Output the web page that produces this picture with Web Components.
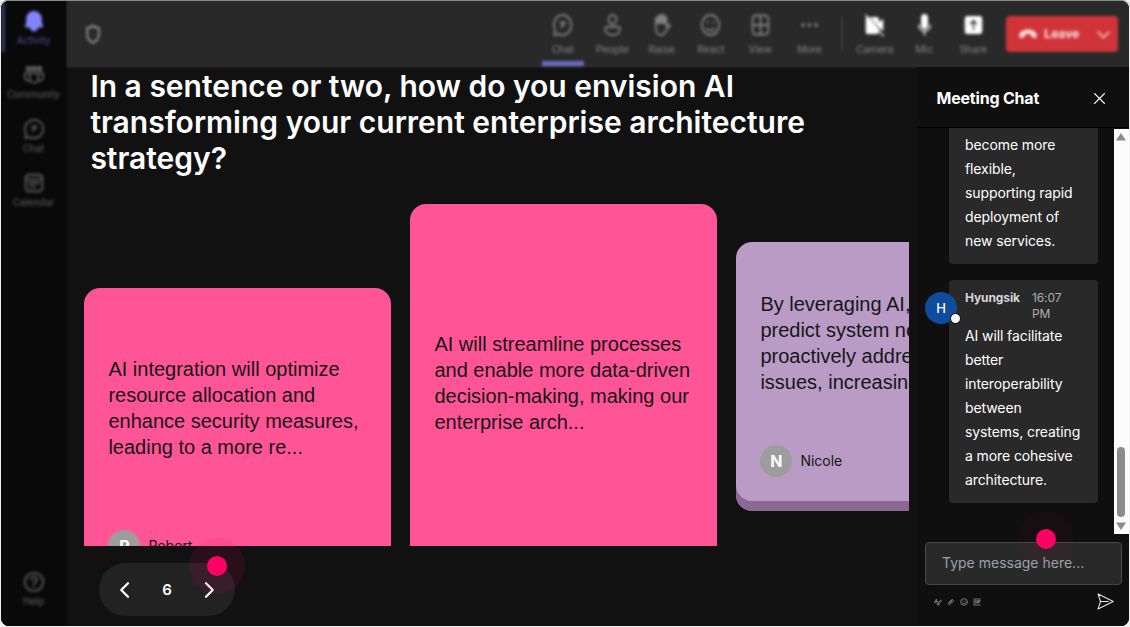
<!DOCTYPE html>
<html lang="en">
<head>
<meta charset="utf-8">
<title>Meeting</title>
<style>
    html, body {
        margin: 0;
        height: 100%;
        overflow: hidden;
        background: #f1f1f1;
        font-family: Inter, "Liberation Sans", sans-serif;
    }
</style>
</head>
<body>
<meeting-app></meeting-app>

<script>
const ICONS = {
    bell: '<path fill="currentColor" d="M12 2a7.500 7.500 0 0 0-7.500 7.500V14L3 18h18l-1.500-4V9.500A7.500 7.500 0 0 0 12 2zM8.500 19a3.500 3.500 0 0 0 7 0z"/>',
    community: '<g fill="currentColor"><circle cx="6" cy="5" r="2.200"/><circle cx="12" cy="5" r="2.200"/><circle cx="18" cy="5" r="2.200"/></g><path d="M7.500 10h9v6a4.500 4.500 0 0 1-9 0zM7 10H2v4a4 4 0 0 0 5.500 4M17 10h5v4a4 4 0 0 1-5.500 4"/>',
    chat: '<path d="M12 2a10 10 0 1 1-4.500 18.900L2.500 22l1-5A10 10 0 0 1 12 2z"/><path d="M9.500 9.500h5.500L10.500 14"/>',
    calendar: '<rect x="3" y="3" width="18" height="18" rx="3.500"/><path d="M3 8h18M7 12h10M7 16h6"/>',
    help: '<circle cx="12" cy="12" r="10"/><path d="M9 9.500a3 3 0 1 1 4 2.800c-.8.400-1 1-1 1.700M12 16.500v1"/>',
    shield: '<path d="M12 3c3 2 5 2.500 7 2.500V12c0 5-3 8-7 9.500C8 20 5 17 5 12V5.500c2 0 4-.5 7-2.500z"/>',
    person: '<circle cx="12" cy="6.500" r="4.500"/><path d="M5 14h14a1.500 1.500 0 0 1 1.500 1.500c0 4-3.500 6.500-8.500 6.500s-8.500-2.500-8.500-6.500A1.500 1.500 0 0 1 5 14z"/>',
    hand: '<path fill="currentColor" d="M5.500 10V6a1.500 1.500 0 0 1 3 0V4a1.500 1.500 0 0 1 3 0V3a1.500 1.500 0 0 1 3 0v2a1.500 1.500 0 0 1 3 0v5z"/><path d="M5.500 7v9c0 4 3 6 6 6 4 0 5-3 7-6l3-3.500c-1.500-1.800-3-.8-4 1V5"/>',
    smile: '<circle cx="12" cy="12" r="10"/><path d="M7.500 15.500c2 2.500 7 2.500 9 0M8 9.500h1M15 9.500h1"/>',
    grid: '<rect x="3" y="2.500" width="18" height="19" rx="3.500"/><path d="M12 2.500v19M3 12h18"/>',
    more: '<g fill="currentColor" stroke="none"><circle cx="4.500" cy="12" r="2"/><circle cx="12" cy="12" r="2"/><circle cx="19.500" cy="12" r="2"/></g>',
    camera: '<path fill="currentColor" stroke="none" d="M3 4h12a2 2 0 0 1 2 2v3l5-3v12l-5-3v4a2 2 0 0 1-2 2H4a2 2 0 0 1-2-2V5z"/><path stroke="#292929" stroke-width="1" d="M4 2 23 21"/><path stroke-width="1.200" d="M2 2 22 23"/>',
    mic: '<rect fill="currentColor" x="9" y="2" width="6" height="13" rx="3"/><path stroke-width="1.500" d="M5.500 12c0 8 13 8 13 0M12 18v4"/>',
    share: '<rect fill="currentColor" stroke="none" x="2" y="3" width="20" height="18" rx="3"/><path stroke="#292929" stroke-width="1.500" d="M12 16.500V8M8.500 11 12 7.500l3.500 3.500"/>',
    phone: '<path fill="currentColor" stroke="none" d="M12 6.500c5.500 0 10.500 2.500 10.500 7.500 0 2-.8 3-2.200 2.700l-3-.7c-1.200-.3-1.500-1-1.500-3.200-2.300-.9-5.300-.9-7.600 0 0 2.200-.3 2.900-1.500 3.200l-3 .7C2.300 17 1.500 16 1.500 14c0-5 5-7.500 10.500-7.500z"/>',
    down: '<path d="m2 7 10 11L22 7"/>',
    left: '<path d="M16 3 7 12l9 9"/>',
    right: '<path d="m8 3 9 9-9 9"/>',
    close: '<path d="m3 3 18 18M21 3 3 21"/>',
    format: '<path d="m2 15 5-11 3 11M3 11h7M10 21c3-1 10-9 12-13l-2-2-8 10-1 4 5-1"/>',
    clip: '<path d="m7 14 7-8c3-3 8 1 5 4l-9 9c-4 3-8-1-5-5l8-8M9 15l6-6"/>',
    gif: '<path d="M22 3H3v18h18M12 8H7v7h5v-4M15 8v7M22 8h-5v7M17 11h4"/>',
    send: '<path d="M1.500 1.500 23 12 1.500 22.500 5 12zM5 12h11"/>'
};

class UiIcon extends HTMLElement {
    connectedCallback() {
        this.attachShadow({ mode: 'open' });
        const size = this.getAttribute('size') || 20;
        const stroke = this.getAttribute('stroke') || 1.5;
        this.shadowRoot.innerHTML = `
            <style>
                :host { display: inline-flex; flex: none; }
                svg { display: block; overflow: visible; }
            </style>
            <svg width="${size}" height="${this.getAttribute('tall') || size}" viewBox="0 0 24 24" preserveAspectRatio="none"
                 fill="none" stroke="currentColor" stroke-width="${stroke}"
                 stroke-linecap="round" stroke-linejoin="round">${ICONS[this.getAttribute('name')]}</svg>
        `;
    }
}

class RailItem extends HTMLElement {
    connectedCallback() {
        this.attachShadow({ mode: 'open' });
        this.shadowRoot.innerHTML = `
            <style>
                :host {
                    display: flex;
                    flex-direction: column;
                    align-items: center;
                    justify-content: center;
                    gap: 2px;
                    height: 54px;
                    box-sizing: border-box;
                    color: #5c5c5c;
                    font: 10.300px/13px Roboto, sans-serif;
                    filter: blur(1.6px);
                }
                :host([active]) {
                    color: #4b4d92;
                    border-left: 4px solid #34365f;
                    padding-right: 4px;
                    height: 48px;
                    margin-bottom: 3px;
                }
                :host([active]) ui-icon { color: #8186ff; }
            </style>
            <ui-icon name="${this.getAttribute('icon')}" size="22" stroke="2"></ui-icon>
            <slot></slot>
        `;
    }
}

class SideRail extends HTMLElement {
    connectedCallback() {
        this.attachShadow({ mode: 'open' });
        this.shadowRoot.innerHTML = `
            <style>
                :host {
                    display: flex;
                    flex-direction: column;
                    background: #090909;
                    box-sizing: border-box;
                    padding: 3px 0 10px;
                    box-shadow: 0 0 3px #090909;
                }
                .space { flex: 1; }
            </style>
            <rail-item icon="bell" active>Activity</rail-item>
            <rail-item icon="community">Community</rail-item>
            <rail-item icon="chat">Chat</rail-item>
            <rail-item icon="calendar">Calendar</rail-item>
            <div class="space"></div>
            <rail-item icon="help">Help</rail-item>
        `;
    }
}

class ToolButton extends HTMLElement {
    connectedCallback() {
        this.attachShadow({ mode: 'open' });
        this.shadowRoot.innerHTML = `
            <style>
                :host {
                    display: flex;
                    flex-direction: column;
                    align-items: center;
                    gap: 6px;
                    width: 49.3px;
                    height: 100%;
                    box-sizing: border-box;
                    padding-top: 12px;
                    color: #808080;
                    font: 10.700px/13px Roboto, sans-serif;
                    filter: blur(1.6px);
                }
                :host([solid]) ui-icon { color: #fff; }
                .bar { width: 42px; height: 5px; margin-top: -1px; }
                :host([active]) .bar { background: #6a6ec0; }
            </style>
            <ui-icon name="${this.getAttribute('icon')}" size="21" tall="24" stroke="2"></ui-icon>
            <slot></slot>
            <div class="bar"></div>
        `;
    }
}

class LeaveButton extends HTMLElement {
    connectedCallback() {
        this.attachShadow({ mode: 'open' });
        this.shadowRoot.innerHTML = `
            <style>
                :host {
                    display: flex;
                    align-items: center;
                    width: 112px;
                    height: 36px;
                    box-sizing: border-box;
                    padding: 0 8px 0 12px;
                    border-radius: 4px;
                    background: #d13438;
                    color: #f7dcdd;
                    font: 700 13.300px/16px Roboto, sans-serif;
                    filter: blur(1.5px);
                }
                .label { margin: 0 auto 0 6px; }
            </style>
            <ui-icon name="phone" size="20"></ui-icon>
            <span class="label"><slot></slot></span>
            <ui-icon name="down" size="13" stroke="2.500"></ui-icon>
        `;
    }
}

class TopBar extends HTMLElement {
    connectedCallback() {
        this.attachShadow({ mode: 'open' });
        this.shadowRoot.innerHTML = `
            <style>
                :host {
                    display: flex;
                    align-items: flex-start;
                    height: 66px;
                    box-sizing: border-box;
                    padding: 0 11px 0 17px;
                    background: #292929;
                    box-shadow: 0 0 4px #292929;
                }
                .shield { color: #909090; filter: blur(1.4px); margin: 22px auto 0 0; }
                .rule { width: 2px; height: 36px; margin: 15px 7px 0; background: #393939; filter: blur(1px); }
                leave-button { margin: 15px 0 0 8px; }
            </style>
            <ui-icon class="shield" name="shield" size="20" tall="22" stroke="2.300"></ui-icon>
            <tool-button icon="chat" active>Chat</tool-button>
            <tool-button icon="person">People</tool-button>
            <tool-button icon="hand">Raise</tool-button>
            <tool-button icon="smile">React</tool-button>
            <tool-button icon="grid">View</tool-button>
            <tool-button icon="more">More</tool-button>
            <div class="rule"></div>
            <tool-button icon="camera" solid>Camera</tool-button>
            <tool-button icon="mic" solid>Mic</tool-button>
            <tool-button icon="share" solid>Share</tool-button>
            <leave-button>Leave</leave-button>
        `;
    }
}

class AnswerCard extends HTMLElement {
    connectedCallback() {
        this.attachShadow({ mode: 'open' });
        const author = this.getAttribute('author');
        this.shadowRoot.innerHTML = `
            <style>
                :host {
                    display: flex;
                    flex: none;
                    flex-direction: column;
                    justify-content: space-between;
                    width: 306.500px;
                    box-sizing: border-box;
                    padding: 0 24px;
                    border-radius: 16px;
                    background: #ff5496;
                    color: #171717;
                }
                .text {
                    font: 20px/26px "Liberation Sans", Arial, sans-serif;
                    white-space: pre-line;
                }
                .author {
                    display: flex;
                    align-items: center;
                    gap: 8px;
                    font: 14px/20px Inter, sans-serif;
                }
                .avatar {
                    width: 32px;
                    height: 32px;
                    border-radius: 50%;
                    background: #9d9d9d;
                    color: #fff;
                    font: 700 16px/32px Inter, sans-serif;
                    text-align: center;
                }
            </style>
            <div class="text"><slot></slot></div>
            ${author ? `<div class="author"><div class="avatar">${author[0]}</div>${author}</div>` : ''}
        `;
    }
}

class AnswerCarousel extends HTMLElement {
    connectedCallback() {
        this.attachShadow({ mode: 'open' });
        this.shadowRoot.innerHTML = `
            <style>
                :host {
                    display: flex;
                    align-items: flex-start;
                    gap: 19.500px;
                    height: 342px;
                    width: 824.500px;
                    overflow: hidden;
                }
                .first { margin-top: 84px; height: 308px; padding: 68px 24px 34px; }
                .second { height: 390px; padding-top: 127px; }
                .third {
                    margin-top: 38px;
                    height: 269px;
                    padding: 49px 24px 34px;
                    background: #b99bc6;
                    box-shadow: inset 0 -10px 0 #8a6a95;
                }
            </style>
            <answer-card class="first" author="Robert">AI integration will optimize
resource allocation and
enhance security measures,
leading to a more re...</answer-card>
            <answer-card class="second">AI will streamline processes
and enable more data-driven
decision-making, making our
enterprise arch...</answer-card>
            <answer-card class="third" author="Nicole">By leveraging AI, we can
predict system needs and
proactively address
issues, increasing u...</answer-card>
        `;
    }
}

class PulseDot extends HTMLElement {
    connectedCallback() {
        this.attachShadow({ mode: 'open' });
        this.shadowRoot.innerHTML = `
            <style>
                :host {
                    position: absolute;
                    display: flex;
                    align-items: center;
                    justify-content: center;
                    width: 56px;
                    height: 56px;
                    border-radius: 50%;
                    background: rgba(255, 0, 102, var(--halo, 0.1));
                }
                div { width: 20px; height: 20px; border-radius: 50%; background: #ff0066; }
            </style>
            <div></div>
        `;
    }
}

class CardPager extends HTMLElement {
    connectedCallback() {
        this.attachShadow({ mode: 'open' });
        this.shadowRoot.innerHTML = `
            <style>
                :host {
                    position: relative;
                    display: flex;
                    align-items: center;
                    justify-content: space-between;
                    width: 136px;
                    height: 53px;
                    box-sizing: border-box;
                    padding: 0 17px 0 17px;
                    border-radius: 27px;
                    background: #222;
                    color: #fff;
                    font: 600 15px/20px Inter, sans-serif;
                }
                pulse-dot { left: 90px; top: -25px; }
            </style>
            <ui-icon name="left" size="18" stroke="3"></ui-icon>
            <span>6</span>
            <ui-icon name="right" size="18" stroke="3"></ui-icon>
            <pulse-dot></pulse-dot>
        `;
    }
}

class ChatMessage extends HTMLElement {
    connectedCallback() {
        this.attachShadow({ mode: 'open' });
        const author = this.getAttribute('author');
        const header = author ? `
            <div class="avatar">${author[0]}<i></i></div>
            <div class="head"><b>${author}</b><span>${this.getAttribute('time')}</span></div>
        ` : '';
        this.shadowRoot.innerHTML = `
            <style>
                :host {
                    position: relative;
                    display: block;
                    box-sizing: border-box;
                    padding: 10px 16px 11px;
                    border-radius: 4px;
                    background: #292929;
                    color: #fff;
                    font-size: 14px;
                    line-height: 24px;
                    letter-spacing: -0.1px;
                }
                .text { white-space: pre-line; }
                .head {
                    display: flex;
                    gap: 12px;
                    margin-bottom: 2px;
                    font-size: 12px;
                    line-height: 16px;
                    color: #adadad;
                }
                b { font-weight: 700; color: #d6d6d6; }
                .avatar {
                    position: absolute;
                    left: -24px;
                    top: 12px;
                    width: 32px;
                    height: 32px;
                    border-radius: 50%;
                    background: #0f4c9c;
                    font: 500 13px/32px Inter, sans-serif;
                    text-align: center;
                }
                i {
                    position: absolute;
                    right: -4px;
                    bottom: 0;
                    width: 9px;
                    height: 9px;
                    border: 1.500px solid #000;
                    border-radius: 50%;
                    background: #fff;
                }
            </style>
            ${header}
            <div class="text"><slot></slot></div>
        `;
    }
}

class ScrollTrack extends HTMLElement {
    connectedCallback() {
        this.attachShadow({ mode: 'open' });
        this.shadowRoot.innerHTML = `
            <style>
                :host {
                    display: flex;
                    flex-direction: column;
                    align-items: center;
                    justify-content: flex-end;
                    box-sizing: border-box;
                    width: 15px;
                    padding: 4px 1px 4px 0;
                    background: #fcfcfc;
                }
                svg { fill: #8b8b8b; }
                .up { margin-bottom: auto; }
                .thumb { width: 8px; height: 70px; margin-bottom: 5px; border-radius: 4px; background: #8b8b8b; }
            </style>
            <svg class="up" width="10" height="8"><path d="M5 0 10 7.500H0z"/></svg>
            <div class="thumb"></div>
            <svg width="10" height="8"><path d="M5 8 10 .5H0z"/></svg>
        `;
    }
}

class ChatComposer extends HTMLElement {
    connectedCallback() {
        this.attachShadow({ mode: 'open' });
        this.shadowRoot.innerHTML = `
            <style>
                :host {
                    position: relative;
                    display: block;
                    padding: 8px 7px 0 8px;
                }
                .field {
                    height: 43px;
                    box-sizing: border-box;
                    padding: 0 16px;
                    border: 1px solid #474747;
                    border-radius: 4px;
                    background: #292929;
                    color: #98a1ae;
                    font-size: 14px;
                    line-height: 40px;
                    white-space: nowrap;
                }
                .tools {
                    display: flex;
                    align-items: center;
                    gap: 5px;
                    height: 33px;
                    padding: 0 8px 0 9px;
                    color: #a5a5a5;
                }
                .send { margin-left: auto; color: #e8e8e8; }
                pulse-dot { left: 101px; top: -23px; --halo: 0.035; }
            </style>
            <div class="field">Type message here...</div>
            <div class="tools">
                <ui-icon name="format" size="8" stroke="2"></ui-icon>
                <ui-icon name="clip" size="8" stroke="2"></ui-icon>
                <ui-icon name="smile" size="8" stroke="2"></ui-icon>
                <ui-icon name="gif" size="8" stroke="2"></ui-icon>
                <ui-icon class="send" name="send" size="17" stroke="1.500"></ui-icon>
            </div>
            <pulse-dot></pulse-dot>
        `;
    }
}

class ChatPanel extends HTMLElement {
    connectedCallback() {
        this.attachShadow({ mode: 'open' });
        this.shadowRoot.innerHTML = `
            <style>
                :host {
                    display: flex;
                    flex-direction: column;
                    background: #0f0f0f;
                    color: #fff;
                }
                header {
                    display: flex;
                    align-items: center;
                    justify-content: space-between;
                    height: 61px;
                    box-sizing: border-box;
                    padding: 2px 23px 0 19.500px;
                    border-bottom: 1px solid #000;
                    font-size: 16px;
                    font-weight: 700;
                    letter-spacing: -0.2px;
                }
                .body { display: flex; height: 406px; }
                .list {
                    display: flex;
                    flex: 1;
                    flex-direction: column;
                    gap: 16px;
                    padding: 0 16px 0 32px;
                }
                .cut { padding-top: 5px; border-radius: 0 0 4px 4px; }
                scroll-track { margin-top: 1px; }
            </style>
            <header>Meeting Chat<ui-icon name="close" size="13" stroke="2.500"></ui-icon></header>
            <div class="body">
                <div class="list">
                    <chat-message class="cut">become more
flexible,
supporting rapid
deployment of
new services.</chat-message>
                    <chat-message author="Hyungsik" time="16:07 PM">AI will facilitate
better
interoperability
between
systems, creating
a more cohesive
architecture.</chat-message>
                </div>
                <scroll-track></scroll-track>
            </div>
            <chat-composer></chat-composer>
        `;
    }
}

class MeetingApp extends HTMLElement {
    connectedCallback() {
        this.attachShadow({ mode: 'open' });
        this.shadowRoot.innerHTML = `
            <style>
                :host {
                    display: grid;
                    grid-template: 66px 1fr / 66px 850px 212px;
                    width: 1130px;
                    height: 627px;
                    box-sizing: border-box;
                    padding: 0 1px 1px;
                    border-top: 1px solid #8a8a8a;
                    border-radius: 8px;
                }
                .frame {
                    display: grid;
                    grid-template: 66px 1fr / 65px 851px 212px;
                    grid-area: 1 / 1 / 3 / 4;
                    overflow: hidden;
                    border-radius: 8px;
                    background: #111;
                }
                side-rail { grid-area: 1 / 1 / 3 / 2; z-index: 1; }
                top-bar { grid-area: 1 / 2 / 2 / 4; }
                main { padding: 1px 0 0 18.400px; }
                h1 {
                    margin: 0 0 28px 6px;
                    color: #fff;
                    font-size: 30px;
                    font-weight: 600;
                    line-height: 36px;
                }
                card-pager { margin: 17px 0 0 14.600px; }
            </style>
            <div class="frame">
                <side-rail></side-rail>
                <top-bar></top-bar>
                <main>
                    <h1>In a sentence or two, how do you envision AI<br>transforming your current enterprise architecture<br>strategy?</h1>
                    <answer-carousel></answer-carousel>
                    <card-pager></card-pager>
                </main>
                <chat-panel></chat-panel>
            </div>
        `;
    }
}

customElements.define('ui-icon', UiIcon);
customElements.define('rail-item', RailItem);
customElements.define('side-rail', SideRail);
customElements.define('tool-button', ToolButton);
customElements.define('leave-button', LeaveButton);
customElements.define('top-bar', TopBar);
customElements.define('answer-card', AnswerCard);
customElements.define('answer-carousel', AnswerCarousel);
customElements.define('pulse-dot', PulseDot);
customElements.define('card-pager', CardPager);
customElements.define('chat-message', ChatMessage);
customElements.define('scroll-track', ScrollTrack);
customElements.define('chat-composer', ChatComposer);
customElements.define('chat-panel', ChatPanel);
customElements.define('meeting-app', MeetingApp);
</script>
</body>
</html>
